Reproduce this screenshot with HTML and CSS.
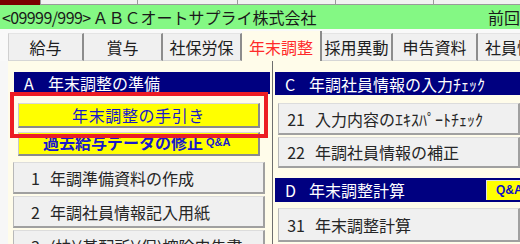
FILE: index.html
```html
<!DOCTYPE html>
<html lang="ja">
<head>
<meta charset="utf-8">
<title>年末調整</title>
<link rel="stylesheet" href="styles.css">
</head>
<body>
<div class="screen">
  <div class="topstrip">
    <span class="ts-red"></span>
    <span class="ts-btn"></span>
    <span class="ts-btn"></span>
    <span class="ts-btn"></span>
    <span class="ts-btn"></span>
    <span class="ts-btn"></span>
  </div>
  <div class="titlebar">
    <span class="company"><span class="code">&lt;09999/999&gt;</span>ＡＢＣオートサプライ株式会社</span>
    <span class="last">前回処理日</span>
  </div>
  <div class="tabs">
    <div class="tab">給与</div>
    <div class="tab">賞与</div>
    <div class="tab">社保労保</div>
    <div class="tab active">年末調整</div>
    <div class="tab">採用異動</div>
    <div class="tab">申告資料</div>
    <div class="tab">社員情報</div>
  </div>
  <div class="panel">
    <div class="col col-left">
      <div class="sec-head"><span class="sec-letter">A</span>年末調整の準備</div>
      <div class="ybtn ybtn-guide">年末調整の手引き</div>
      <div class="ybtn ybtn-qa">過去給与データの修正<span class="qa-small">Q&amp;A</span></div>
      <div class="gbtn gbtn-first"><span class="num">1</span>年調準備資料の作成</div>
      <div class="gbtn"><span class="num">2</span>年調社員情報記入用紙</div>
      <div class="gbtn"><span class="num">3</span>(扶)(基配所)(保)控除申告書</div>
    </div>
    <div class="sep"></div>
    <div class="col col-right">
      <div class="sec-head sec-c"><span class="sec-letter">C</span>年調社員情報の入力ﾁｪｯｸ</div>
      <div class="gbtn gbtn-r gbtn-first-r"><span class="num">21</span>入力内容のｴｷｽﾊﾟｰﾄﾁｪｯｸ</div>
      <div class="gbtn gbtn-r"><span class="num">22</span>年調社員情報の補正</div>
      <div class="sec-head sec-d"><span class="sec-letter">D</span>年末調整計算<span class="qa-badge">Q&amp;A</span></div>
      <div class="gbtn gbtn-r gbtn-31"><span class="num">31</span>年末調整計算</div>
    </div>
  </div>
  <div class="highlight"></div>
</div>
</body>
</html>
```

FILE: styles.css
```css
* { box-sizing: border-box; }
html, body { margin: 0; padding: 0; }
body {
  width: 520px;
  height: 244px;
  overflow: hidden;
  background: #f7f7f7;
  font-family: "Noto Sans CJK JP", "Noto Sans", sans-serif;
  font-size: 16px;
  color: #202020;
}
.screen {
  position: relative;
  width: 520px;
  height: 244px;
  display: flex;
  flex-direction: column;
  overflow: hidden;
}
.screen > * { flex: none; }
.topstrip {
  height: 5px;
  display: grid;
  grid-template-columns: 40px 97px 100px 98px 98px 1fr;
  background: #f0f0f0;
}
.ts-red { background: #7a0000; }
.ts-btn {
  background: #f2f2f2;
  border-left: 1px solid #9a9a9a;
  border-bottom: 1px solid #9a9a9a;
}
.titlebar {
  height: 24px;
  background: #84f884;
  display: flex;
  align-items: center;
  white-space: nowrap;
  overflow: hidden;
  line-height: 24px;
  color: #1a1a1a;
}
.company {
  flex: none;
  width: 488px;
  padding-left: 2px;
}
.code { letter-spacing: -0.6px; margin-right: 2px; }
.last { flex: none; }
.tabs {
  height: 32px;
  padding: 3px 0 0 8px;
  display: grid;
  grid-template-columns: 76px 79px 79px 80px 71px 85px 60px;
  background: #f9f9f9;
  overflow: hidden;
}
.tab {
  margin-top: 1px;
  background: #f0f0f0;
  border-right: 2px solid #8c8c8c;
  border-top: 1px solid #e4e4e4;
  border-bottom: 1px solid #d6d6d6;
  display: flex;
  align-items: center;
  justify-content: center;
  line-height: 20px;
  white-space: nowrap;
  overflow: hidden;
}
.tab:first-child { border-left: 1px solid #d0d0d0; }
.tab.active {
  margin-top: -1px;
  background: #fffcea;
  color: #ff2a2a;
  border-top: none;
  border-bottom: none;
  padding-top: 2px;
}
.tab:last-child { justify-content: flex-start; padding-left: 7px; border-right: none; }
.panel {
  height: 183px;
  margin-left: 8px;
  background: #fffcea;
  display: flex;
  overflow: hidden;
}
.col { display: flex; flex-direction: column; padding-top: 11px; }
.col > * { flex: none; }
.col-left { width: 256px; margin-left: 6px; }
.sep { width: 1px; margin: 0 2px; background: #6e6e6e; flex: none; }
.col-right { flex: 1; min-width: 0; }
.sec-head {
  height: 22px;
  background: #000080;
  color: #ffffff;
  display: flex;
  align-items: center;
  padding-left: 10px;
  line-height: 20px;
  white-space: nowrap;
}
.sec-c { height: 23px; }
.sec-d { height: 24px; margin-top: 10px; }
.sec-letter { display: inline-block; width: 24px; }
.qa-badge {
  margin-left: auto;
  align-self: stretch;
  margin-top: 2px;
  margin-bottom: 2px;
  width: 34px;
  background: #ffff00;
  color: #1010c8;
  border-top: 1px solid #e0e0e0;
  border-left: 1px solid #e0e0e0;
  font-family: "Liberation Sans", sans-serif;
  font-weight: bold;
  font-size: 12px;
  line-height: 18px;
  padding-left: 9px;
}
.ybtn {
  margin-left: 4px;
  width: 242px;
  background: #ffff00;
  color: #1818cc;
  border-top: 1px solid #d8d8d8;
  border-left: 1px solid #c8c8c8;
  border-bottom: 2px solid #8a8a8a;
  border-right: 2px solid #8a8a8a;
  display: flex;
  align-items: center;
  line-height: 20px;
  white-space: nowrap;
}
.ybtn-guide {
  margin-top: 9px;
  height: 25px;
  justify-content: center;
  letter-spacing: 0.6px;
}
.ybtn-qa {
  margin-top: 4px;
  height: 24px;
  padding-left: 24px;
  padding-bottom: 3px;
  font-weight: bold;
}
.qa-small {
  font-family: "Liberation Sans", sans-serif;
  font-size: 11px;
  margin-left: 3px;
  align-self: flex-end;
  line-height: 17px;
}
.gbtn {
  height: 31px;
  margin-top: 2px;
  background: #f0f0f0;
  border-top: 1px solid #dcdcdc;
  border-left: 1px solid #b8b8b8;
  border-bottom: 2px solid #a0a0a0;
  border-right: 2px solid #a0a0a0;
  display: flex;
  align-items: center;
  padding-left: 6px;
  line-height: 20px;
  white-space: nowrap;
  overflow: hidden;
  color: #262626;
}
.col-left .gbtn { margin-left: -1px; width: 252px; height: 32px; }
.gbtn-first { margin-top: 6px; }
.num {
  display: inline-block;
  width: 20px;
  text-align: right;
  margin-right: 10px;
  flex: none;
}
.gbtn-r { margin-left: 3px; }
.gbtn-first-r { margin-top: 8px; height: 32px; }
.gbtn-31 { margin-top: 6px; height: 34px; }
.highlight {
  position: absolute;
  left: 10px;
  top: 92px;
  width: 258px;
  height: 46px;
  border: 4px solid #ec1c24;
}
```
